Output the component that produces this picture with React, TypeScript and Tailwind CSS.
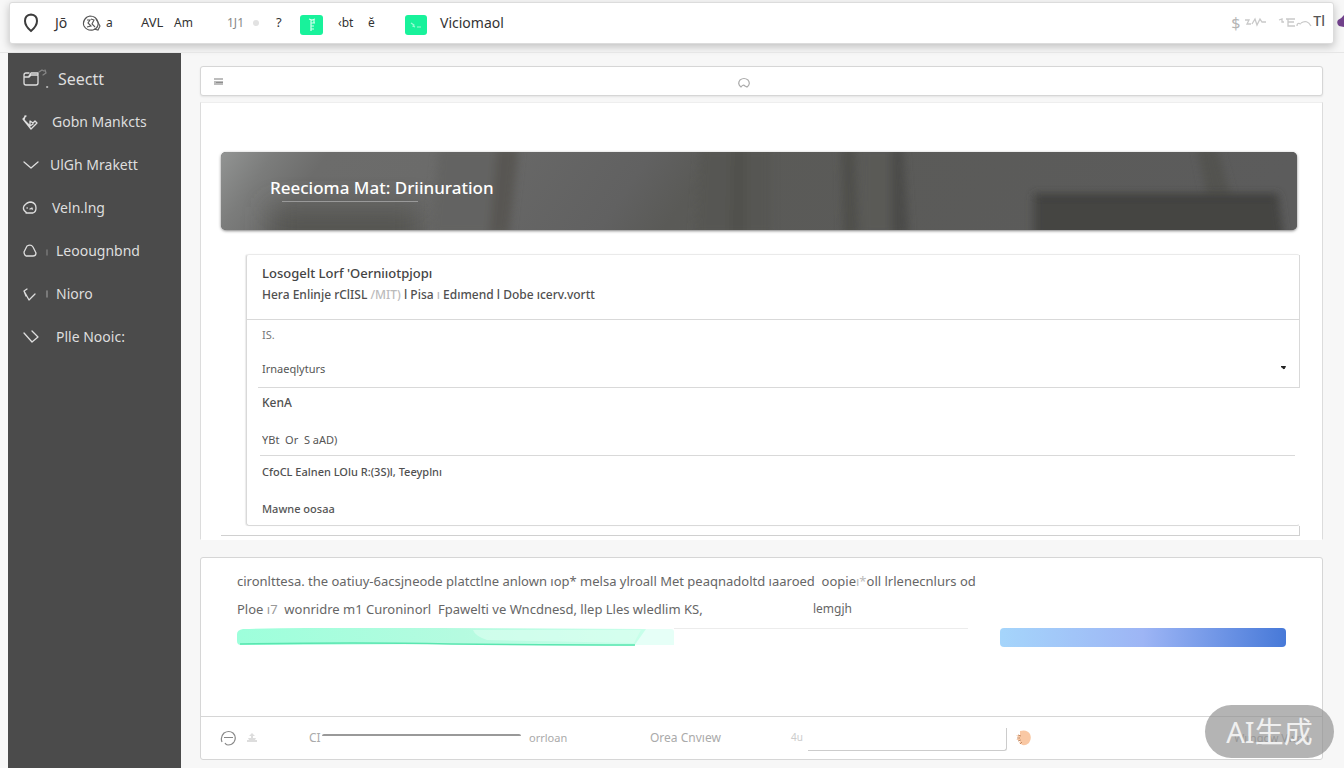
import type { ReactNode } from 'react'
import clsx from 'clsx'

const LineIcon = ({ children }: { children: ReactNode }) => (
  <svg
    viewBox="0 0 28 22"
    className="h-[22px] w-7 shrink-0"
    fill="none"
    stroke="currentColor"
    strokeWidth="1.3"
    strokeLinecap="round"
    strokeLinejoin="round"
    aria-hidden="true"
  >
    {children}
  </svg>
)

const navItems = [
  {
    label: 'Seectt',
    text: 'text-base pl-2',
    icon: (
      <>
        <path d="M7 5H4Q2 5 2 7v8q0 2 2 2h10q2 0 2-2V8M2 9h5l2-2h7V5H9L7 8" />
        <path d="M17 4l3-2 2 1M21 7l3-2-1-3" opacity=".4" />
        <path d="M25 19h.3" strokeWidth="2" opacity=".7" />
      </>
    ),
  },
  {
    label: 'Gobn Mankcts',
    text: 'pl-[2px]',
    icon: <path d="M4 5L1 8l8 10 6-6-2-2-2 2-3-2v5l3-2M3 5l-1 4 5 5" />,
  },
  { label: 'UlGh Mrakett', text: 'pl-0', icon: <path d="M2 8l7 6 7-6" /> },
  {
    label: 'Veln.lng',
    text: 'pl-[2px]',
    icon: (
      <>
        <path d="M5 16Q0 13 2 9q3-4 7-4 5 1 5 6 0 4-3 5H4" />
        <path d="M5 11h.3M8 12l2-1M10 12h.5" />
      </>
    ),
  },
  {
    label: 'Leoougnbnd',
    text: 'pl-1.5',
    icon: (
      <>
        <path d="M2 12L5 6q4-2 6 1l3 6q0 3-3 3H4q-2-1-2-4z" />
        <path d="M25 10v5" opacity=".35" />
      </>
    ),
  },
  {
    label: 'Nioro',
    text: 'pl-1.5',
    icon: (
      <>
        <path d="M5 6L2 8l5 9 6-6M2 8l2 5" />
        <path d="M25 8v6" opacity=".5" />
      </>
    ),
  },
  { label: 'Plle Nooic:', text: 'pl-1.5', icon: <path d="M2 7l8 9 6-5-6-6" /> },
]

const TopBar = () => (
  <header className="mt-[2px] mr-2.5 ml-[9px] flex h-[42px] items-center justify-between rounded-[3px] border border-[#dcdcdc] bg-white pr-2 pl-[13px] text-xs text-[#333] shadow-[0_3px_8px_rgba(0,0,0,0.22)]">
    <nav aria-label="Primary" className="flex items-center whitespace-nowrap">
      <a href="#home" aria-label="Home" className="w-8">
        <svg viewBox="0 0 16 20" className="h-5 w-4" fill="none" stroke="#3c3c3c" strokeWidth="2" aria-hidden="true">
          <path d="M8 1.500Q14 2 14 8q0 5-6 10Q2 13 2 8q0-6 6-6.500z" />
        </svg>
      </a>
      <a href="#jo" className="w-[27px] text-sm">
        Jō
      </a>
      <a href="#account" aria-label="Account" className="w-6">
        <svg viewBox="0 0 20 18" className="h-[18px] w-5" fill="none" stroke="#555" strokeWidth="1.100" aria-hidden="true">
          <path d="M5 3Q0 7 2 12q3 5 9 4 6-2 5-8-2-6-8-6L5 3" />
          <path d="M5 6h3L6 9l3 3-4 1M9 5l3 1-2 4 3 3M14 5l4 7-2 4-4-1" />
        </svg>
      </a>
      <a href="#a" className="w-[35px]">a</a>
      <a href="#avl" className="w-[33px] text-[13px]">AVL</a>
      <a href="#am" className="w-[53px]">Am</a>
      <a href="#lt" className="w-[26px] text-xs text-[#888]">1J1</a>
      <span className="w-[23px]">
        <span className="block size-1.5 rounded-full bg-[#e2e2e2]" />
      </span>
      <a href="#help" className="w-6 text-[13px]">?</a>
      <button type="button" aria-label="Files" className="mt-1 mr-[15px] flex h-5 w-[23px] items-center justify-center rounded-[3px] bg-[#18f29b]">
        <svg viewBox="0 0 10 16" className="h-4 w-2.5" fill="none" stroke="#d5ffef" strokeWidth="1.200" aria-hidden="true">
          <path d="M2 2l3 1 3-1M4 3v11M4 6h4M4 9h3M4 12h3M7 3v3" />
        </svg>
      </button>
      <a href="#bt" className="w-[30px]">‹bt</a>
      <a href="#e" className="w-[37px]">ĕ</a>
      <button type="button" aria-label="Activity" className="mt-[3px] mr-[13px] flex h-5 w-[22px] items-center justify-center rounded-[3px] bg-[#18f29b]">
        <svg viewBox="0 0 14 10" className="h-2.5 w-3.5" fill="none" stroke="#9dfbd6" strokeWidth="1.200" aria-hidden="true">
          <path d="M2 3l3 2-1 1 2 1M8 7h4" />
        </svg>
      </button>
      <a href="#viciomaol" className="text-sm">Viciomaol</a>
    </nav>
    <div className="flex items-center text-[#b5b5b5]">
      <span className="w-3.5 text-base">$</span>
      <svg viewBox="0 0 68 14" className="h-3.5 w-[68px]" fill="none" stroke="#c9c9c9" strokeWidth="1.300" aria-hidden="true">
        <path d="M0 4h4l-2 4h4M7 8l3-5 2 6 3-6 2 3h4" />
        <path d="M34 4l3-1v3h2M41 3h9M43 3v7h7M43 6h6M52 10q0-4 4-2M56 7q6-4 10 3" />
      </svg>
      <span className="-mt-1 text-sm font-medium text-[#555]">Tl</span>
    </div>
  </header>
)

const Sidebar = () => (
  <aside className="w-[173px] shrink-0 bg-[#4b4b4b] pt-1 text-[#dedede]">
    <nav aria-label="Markets">
      <ul>
        {navItems.map((item) => (
          <li key={item.label}>
            <a href="#market" className="flex h-[43px] items-center pl-3.5 text-sm whitespace-nowrap">
              <LineIcon>{item.icon}</LineIcon>
              <span className={item.text}>{item.label}</span>
            </a>
          </li>
        ))}
      </ul>
    </nav>
  </aside>
)

const SearchBar = () => (
  <div className="flex h-[30px] items-center rounded-[3px] border border-[#d6d6d6] bg-white px-3 shadow-[0_1px_2px_rgba(0,0,0,0.08)]">
    <svg viewBox="0 0 12 10" className="mt-[2px] h-2.5 w-3" aria-hidden="true">
      <path d="M1 1h9v2H1zM1 4h9v4H1z" fill="#bdbdbd" />
      <path d="M3 5.500h7" stroke="#8f8f8f" />
    </svg>
    <input type="search" aria-label="Search" className="min-w-0 flex-1 bg-transparent outline-none" />
    <button type="button" aria-label="Find" className="mt-[3px]">
      <svg viewBox="0 0 14 12" className="h-3 w-3.5" fill="none" stroke="#aaa" strokeWidth="1.200" aria-hidden="true">
        <path d="M4 10Q0 7 3 3q4-3 8 0 3 4-1 7l-2-1q-2-2-4 1z" />
      </svg>
    </button>
    <span className="mr-12 flex-1" />
  </div>
)

const Banner = () => (
  <section className="relative h-[78px] overflow-hidden rounded-[5px] bg-[#5d5d5c] shadow-[0_1px_3px_rgba(0,0,0,0.5)]">
    <svg viewBox="0 0 1076 78" preserveAspectRatio="none" className="absolute inset-0 size-full" aria-hidden="true">
      <defs>
        <linearGradient id="base" x2="1" y2=".05">
          <stop offset="0" stopColor="#929493" />
          <stop offset=".05" stopColor="#7b7c7b" />
          <stop offset=".1" stopColor="#6c6c6b" />
          <stop offset=".2" stopColor="#6b6b6a" />
          <stop offset=".4" stopColor="#616161" />
          <stop offset=".46" stopColor="#5a5a57" />
          <stop offset="1" stopColor="#5c5c5c" />
        </linearGradient>
        <filter id="soft" x="-20%" y="-20%" width="140%" height="140%">
          <feGaussianBlur stdDeviation="4" />
        </filter>
        <filter id="softer" x="-30%" y="-60%" width="160%" height="220%">
          <feGaussianBlur stdDeviation="14" />
        </filter>
      </defs>
      <path d="M0 0h1076v78H0z" fill="url(#base)" />
      <path d="M50 55h150v50H50z" fill="#555551" filter="url(#softer)" />
      <g filter="url(#soft)">
        <path d="M218 -5h58l-6 88h-60z" fill="#646462" />
        <path d="M276 -5h22l-10 88h-20z" fill="#595752" />
        <path d="M480 -5h70v88h-76z" fill="#575753" />
        <path d="M510 -5h16v88h-18z" fill="#51514d" />
        <path d="M620 -5h14l4 88h-16z" fill="#4f4f4c" />
        <path d="M640 -5h30v88h-30z" fill="#5a5a56" />
        <path d="M670 -5h12l6 88h-18z" fill="#4b4b48" />
        <path d="M976 -5h20l14 50h-24z" fill="#535350" />
      </g>
      <g filter="url(#soft)">
        <path d="M813 42h244l6 45H813z" fill="#454543" />
        <path d="M813 42h244v6H813z" fill="#3c3c3b" />
      </g>
    </svg>
    <div className="relative flex h-full flex-col pt-6 pl-[49px] text-white">
      <h1 className="text-[17px] leading-6 font-medium">Reecioma Mat: Driinuration</h1>
      <hr className="mt-px ml-3 w-[136px] border-[#999999]" />
    </div>
  </section>
)

const fieldClass = 'block h-5 w-full appearance-none bg-transparent text-[11px] text-[#555] outline-none'

const OrderForm = () => (
  <form className="mt-6 ml-[25px] rounded-[3px] border border-t-[#eaeaea] border-r-transparent border-b-[#d9d9d9] border-l-[#d9d9d9] text-xs text-[#505050] shadow-[-1px_0_1px_rgba(0,0,0,0.08)]">
    <div className="-mr-px border-r border-[#d9d9d9]">
      <div className="h-[65px] border-b border-[#d9d9d9] pt-[7px] pl-[15px] whitespace-nowrap">
        <h2 className="text-[13px] leading-[22px] font-medium text-[#444]">Losogelt Lorf &apos;Oerniıotpjopı</h2>
        <p className="leading-[22px] font-medium">
          Hera Enlinje rClISL <span className="text-[#bbb]">/MIT)</span> l Pisa <span className="text-[#bbb]">ı</span>{' '}
          Edımend l Dobe ıcerv.vortt
        </p>
      </div>
      <div className="relative ml-[11px] flex h-[68px] flex-col justify-between border-b border-[#d9d9d9] pt-[5px] pr-3 pb-2 pl-1">
        <label htmlFor="market" className="text-[11px] leading-5 text-[#777]">IS.</label>
        <select id="market" className={fieldClass}>
          <option>Irnaeqlyturs</option>
        </select>
        <svg viewBox="0 0 8 6" className="pointer-events-none absolute right-3 bottom-4 h-1.5 w-2" aria-hidden="true">
          <path d="M2 1.500h4.500L5 4z" fill="#222" stroke="#222" strokeLinejoin="round" />
        </svg>
      </div>
    </div>
    <div className="mr-1 ml-[13px] flex h-[68px] flex-col justify-between border-b border-[#d9d9d9] pt-[5px] pb-1.5 pl-[2px]">
      <label htmlFor="kena" className="leading-5 font-medium">KenA</label>
      <input id="kena" defaultValue="YBt  Or  S aAD)" className={fieldClass} />
    </div>
    <div className="mr-1 ml-[15px] flex h-[69px] flex-col justify-between pt-1.5 pb-[7px]">
      <label htmlFor="location" className="text-[11px] leading-5 font-medium">CfoCL Ealnen LOlu R:(3S)l, Teeyplnı</label>
      <input id="location" defaultValue="Mawne oosaa" className={clsx(fieldClass, 'font-medium')} />
    </div>
  </form>
)

const SummaryCard = () => (
  <section className="mt-[17px] rounded-[3px] border border-[#d6d6d6] bg-white">
    <div className="h-[158px] pt-[9px] pr-9 pl-9">
      <p className="text-[13px] leading-7 whitespace-nowrap text-[#666]">
        cironlttesa. the oatiuy-6acsjneode platctlne anlown ıop* melsa ylroall Met peaqnadoltd ıaaroed &nbsp;oopie
        <span className="text-[#bbb]">ı*</span>oll lrlenecnlurs od
      </p>
      <p className="flex text-[13px] leading-7 whitespace-nowrap text-[#666]">
        <span className="w-[576px]">
          Ploe <span className="text-[#999]">ı7</span>&nbsp; wonridre m1 Curoninorl &nbsp;Fpawelti ve Wncdnesd, llep
          Lles wledlim KS,
        </span>
        <span className="text-xs leading-7">lemgjh</span>
      </p>
      <div className="mt-[5px] flex items-start">
        <div className="h-[18px] w-[437px]" role="meter" aria-label="Progress" aria-valuenow={90}>
          <svg viewBox="0 0 437 18" preserveAspectRatio="none" className="size-full" aria-hidden="true">
            <defs>
              <linearGradient id="mint">
                <stop offset="0" stopColor="#9dffdb" />
                <stop offset=".55" stopColor="#b5fbe0" />
                <stop offset="1" stopColor="#c8ffea" />
              </linearGradient>
            </defs>
            <path d="M400 1h34q3 0 3 3v13h-43z" fill="#e6fff7" />
            <path d="M6 1Q100-1 200 0L409 1l-12 17L200 16 4 17Q0 17 0 13V6q0-4 6-5z" fill="url(#mint)" />
            <path d="M236 2h168l-7 13L250 12q-12-4-14-10z" fill="#ddfff2" opacity=".6" />
            <path d="M3 16q120-2 210 0 100 1 185 1" fill="none" stroke="#5ae6b0" strokeWidth="1.500" />
          </svg>
        </div>
        <div className="mr-8 flex-1 border-t border-[#ececec]" />
        <div
          role="meter"
          aria-label="Balance"
          aria-valuenow={100}
          className="h-[19px] w-[286px] rounded-[4px] bg-gradient-to-r from-[#a5d5fb] via-[#9db5f5] to-[#4779d8]"
        />
      </div>
    </div>
    <footer className="flex h-[43px] items-center border-t border-[#d6d6d6] pl-[19px] text-xs whitespace-nowrap text-[#aaa]">
      <button type="button" aria-label="Remove" className="mr-2.5">
        <svg viewBox="0 0 17 17" className="size-[17px]" fill="none" stroke="#888" strokeWidth="1.200" aria-hidden="true">
          <path d="M2 12Q0 7 4 3q5-3 9 0 4 4 1 9-2 3-6 3-2 0-3-2M4 7.500h9" />
        </svg>
      </button>
      <svg viewBox="0 0 10 12" className="mr-[52px] h-3 w-2.5" fill="#ddd" aria-hidden="true">
        <path d="M5 1l3 3H6v2h3L8 8h2v2H0V8h2L1 6h3V4H2z" />
      </svg>
      <label htmlFor="amount" className="w-[13px]">CI</label>
      <input id="amount" className="h-2 w-[199px] rounded-t-[2px] border-t-2 border-[#999] bg-transparent outline-none" />
      <span className="w-[129px] pl-2 text-[11px]">orrloan</span>
      <a href="#overview" className="w-[141px]">Orea Cnvıew</a>
      <label htmlFor="note" className="w-[17px] text-[10px] text-[#ccc]">4u</label>
      <input id="note" className="mt-[3px] h-[23px] w-[199px] rounded-br-[3px] border-r border-b border-[#ccc] bg-transparent outline-none" />
      <svg viewBox="0 0 18 16" className="ml-2 h-4 w-[18px]" aria-hidden="true">
        <path d="M5 1q7-2 10 3 2 5-1 9-5 4-8 1l-2-1 2-3-5 0 3-2-3-3 4 1z" fill="#f9c8a4" />
        <path d="M3 5l3 1M2 8h3M3 11l3-1M5 14l2-2" fill="none" stroke="#c58b64" />
      </svg>
      <a href="#more" className="ml-auto pr-2.5 text-[11px]">Wııngow Vwp ı.</a>
    </footer>
  </section>
)

const App = () => {
  return (
    <div
      className="relative flex min-h-screen flex-col overflow-hidden bg-[#f7f7f7]"
      style={{ fontFamily: '"Noto Sans", "Noto Sans CJK SC", sans-serif' }}
    >
      <TopBar />
      <svg viewBox="0 0 7 14" className="absolute top-[15px] right-0 h-3.5 w-[7px]" aria-hidden="true">
        <path d="M7 0Q4 4 1 5q-2 3 1 6l5 1z" fill="#70408a" />
      </svg>
      <div className="mt-2 flex flex-1 border-t border-[#e6e6e6] pl-2">
        <Sidebar />
        <main className="min-w-0 flex-1 pt-[13px] pr-[21px] pb-2 pl-[19px]">
          <SearchBar />
          <section className="mt-1.5 border border-t-[#eeeeee] border-r-[#dcdcdc] border-b-transparent border-l-[#dcdcdc] bg-white pt-[49px] pb-[3px]">
            <div className="pr-[25px] pl-5">
              <Banner />
            </div>
            <div className="pr-[22px] pl-5">
              <OrderForm />
              <div className="h-2.5 border-r border-b border-[#d0d0d0]" />
            </div>
          </section>
          <SummaryCard />
        </main>
      </div>
      <div className="absolute right-2.5 bottom-2.5 flex h-[53px] w-[129px] items-center justify-center rounded-full bg-[#8c8c8c]/65 text-[29px] text-[#f0f0f0]">
        AI生成
      </div>
    </div>
  )
}

export default App
